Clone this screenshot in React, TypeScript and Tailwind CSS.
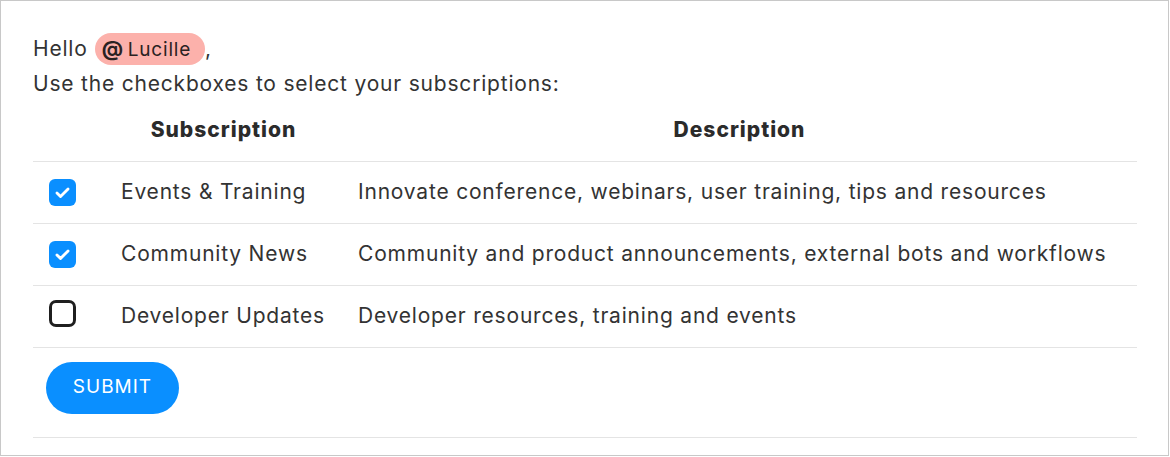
import { useState } from "react";

const ROWS = [
  { name: "Events & Training", desc: "Innovate conference, webinars, user training, tips and resources", on: true },
  { name: "Community News", desc: "Community and product announcements, external bots and workflows", on: true },
  { name: "Developer Updates", desc: "Developer resources, training and events", on: false },
];

function Check({ on, onClick }: { on: boolean; onClick: () => void }) {
  return (
    <button
      onClick={onClick}
      className={
        on
          ? "w-[27px] h-[27px] rounded-[6px] bg-[#0a8fff] flex items-center justify-center"
          : "w-[27px] h-[27px] rounded-[7px] border-[3px] border-[#1f1f1f] bg-white"
      }
    >
      {on && (
        <svg width="19" height="19" viewBox="0 0 24 24" fill="none">
          <path d="M5 12.5l4.5 4.5L19 7.5" stroke="white" strokeWidth="3.6" strokeLinecap="round" strokeLinejoin="round" />
        </svg>
      )}
    </button>
  );
}

export default function App() {
  const [checks, setChecks] = useState(ROWS.map((r) => r.on));

  return (
    <div
      className="w-[1169px] h-[456px] border border-[#c8c8c8] bg-white text-[#333] text-[21px] tracking-[0.8px]"
      style={{ fontFamily: "Inter, 'Noto Sans', sans-serif" }}
    >
      <div className="pl-[32px] pr-[31px] pt-[32px]">
        {/* greeting */}
        <div className="flex items-center h-[32px]">
          <span>Hello</span>
          <span className="ml-[7px] h-[32px] pl-[7px] pr-[14px] rounded-full bg-[#fcb1ab] flex items-center text-[19px] text-[#2a2222]">
            <span className="font-bold text-[21px] mr-[4px]">@</span>
            <span className="pt-[2px]">Lucille</span>
          </span>
          <span>,</span>
        </div>
        <div className="mt-[4px] leading-[30px]">Use the checkboxes to select your subscriptions:</div>

        {/* table */}
        <table className="w-full border-collapse">
          <thead>
            <tr className="border-b border-[#e4e4e4] h-[62px]">
              <th className="w-[72px]"></th>
              <th className="w-[237px] font-extrabold text-[#2b2b2b] text-center tracking-[1px]">Subscription</th>
              <th className="font-extrabold text-[#2b2b2b] text-center tracking-[1px]">Description</th>
            </tr>
          </thead>
          <tbody>
            {ROWS.map((r, i) => (
              <tr key={r.name} className="border-b border-[#e4e4e4] h-[62px]">
                <td className="pl-[16px]">
                  <Check on={checks[i]} onClick={() => setChecks(checks.map((c, j) => (j === i ? !c : c)))} />
                </td>
                <td className="pl-[16px] whitespace-nowrap">{r.name}</td>
                <td className="pl-[16px] whitespace-nowrap">{r.desc}</td>
              </tr>
            ))}
            <tr className="border-b border-[#e4e4e4] h-[90px]">
              <td colSpan={3} className="pl-[13px] pt-[14px] align-top">
                <button className="w-[133px] h-[52px] rounded-full bg-[#0a8fff] text-white text-[19px] tracking-[1px]">
                  SUBMIT
                </button>
              </td>
            </tr>
          </tbody>
        </table>
      </div>
    </div>
  );
}
